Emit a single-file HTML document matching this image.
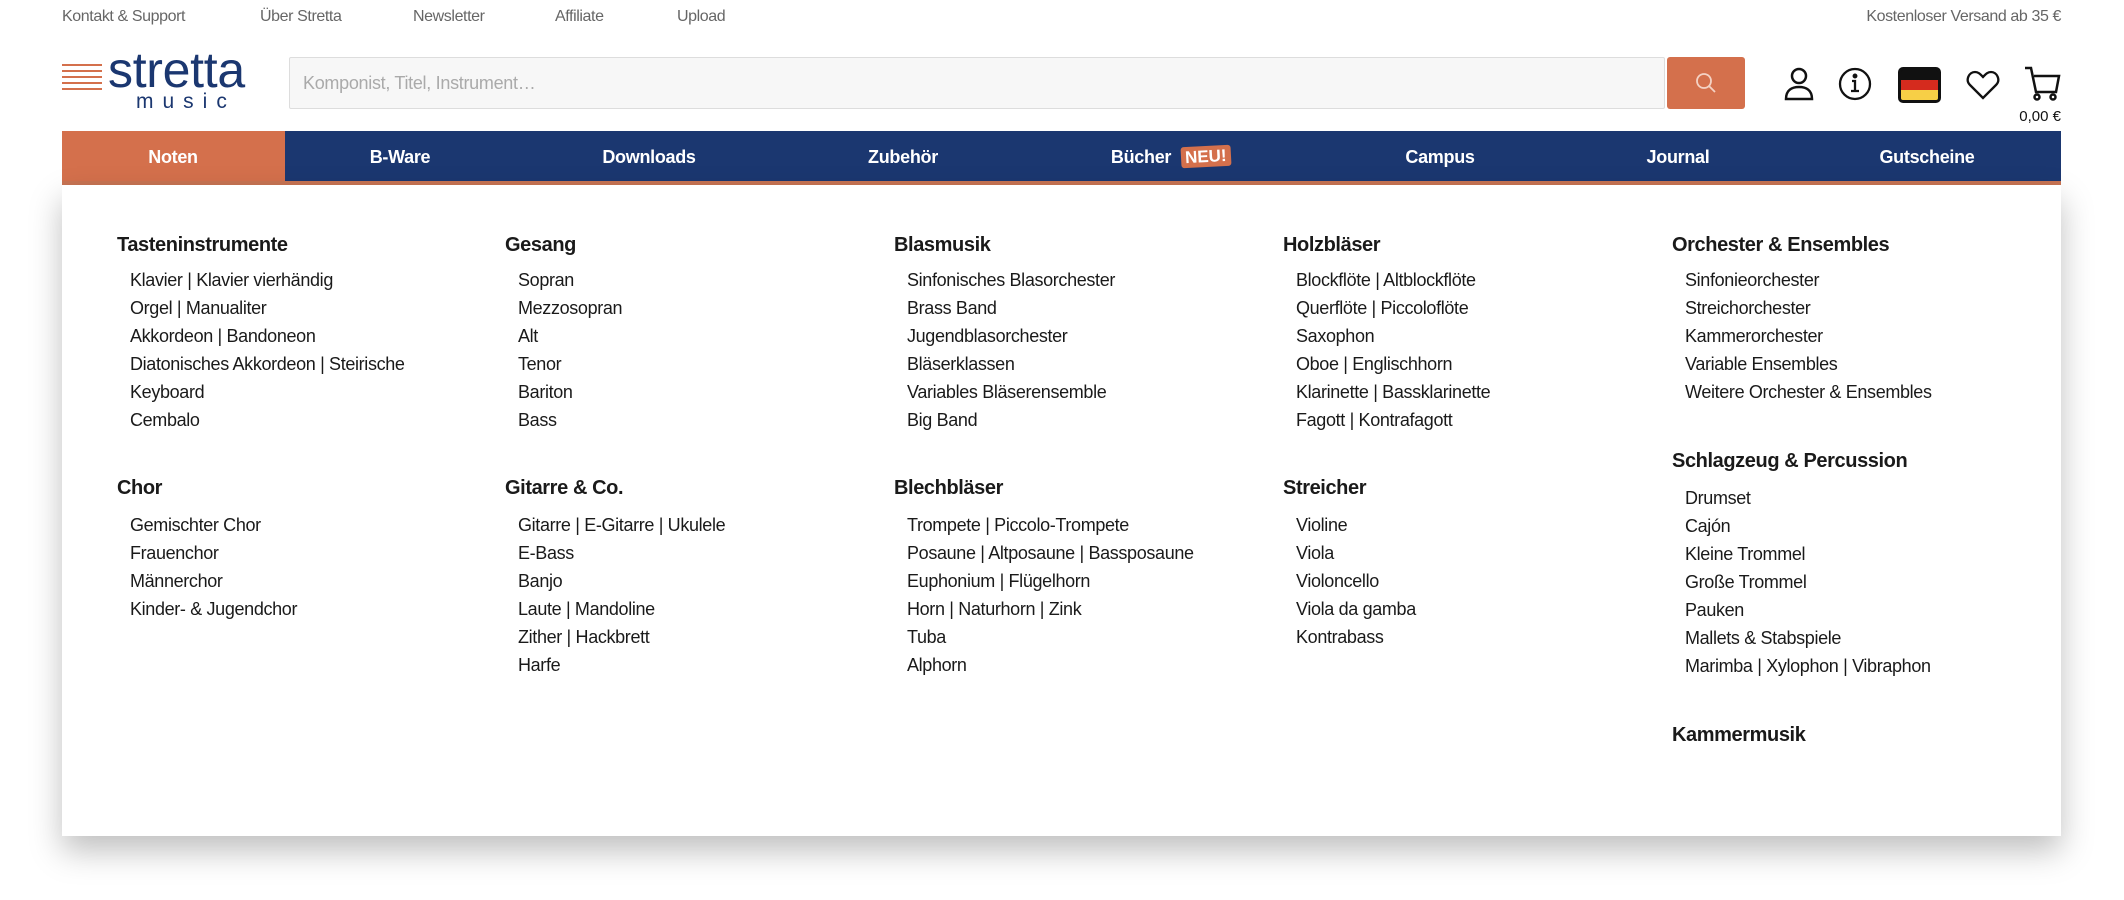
<!DOCTYPE html>
<html><head><meta charset="utf-8">
<style>
*{margin:0;padding:0;box-sizing:border-box}
body{width:2124px;height:900px;background:#fff;font-family:"Liberation Sans",sans-serif;position:relative;overflow:hidden;color:#1a1a1a}
.a{position:absolute;white-space:nowrap}
.top{font-size:16px;color:#666;top:8px;letter-spacing:-0.4px}
.nav{position:absolute;left:62px;top:131px;width:1999px;height:52px;background:#1b3770}
.navb{position:absolute;left:62px;top:181px;width:1999px;height:4px;background:#c87453}
.ni{position:absolute;top:147px;color:#fff;font-size:18px;font-weight:bold;transform:translateX(-50%);letter-spacing:-0.3px}
.panel{position:absolute;left:62px;top:185px;width:1999px;height:651px;background:#fff;box-shadow:0 15px 30px rgba(0,0,0,0.25)}
.h{position:absolute;font-size:20px;font-weight:bold;letter-spacing:-0.4px;white-space:nowrap;line-height:28px}
.l{position:absolute;font-size:18px;line-height:28px;letter-spacing:-0.35px;white-space:nowrap}
</style></head><body>
<div class="a top" style="left:62px">Kontakt &amp; Support</div>
<div class="a top" style="left:260px">Über Stretta</div>
<div class="a top" style="left:413px">Newsletter</div>
<div class="a top" style="left:555px">Affiliate</div>
<div class="a top" style="left:677px">Upload</div>
<div class="a top" style="right:63px">Kostenloser Versand ab 35 €</div>

<div class="a" style="left:62px;top:64px;width:40px">
<div style="height:2px;background:#d4704c;margin-bottom:4px"></div><div style="height:2px;background:#d4704c;margin-bottom:4px"></div><div style="height:2px;background:#d4704c;margin-bottom:4px"></div><div style="height:2px;background:#d4704c;margin-bottom:4px"></div><div style="height:2px;background:#d4704c"></div></div>
<div class="a" style="left:108px;top:44px;font-size:50px;color:#1b3770;letter-spacing:-0.3px;line-height:52px">stretta</div>
<div class="a" style="left:136px;top:91px;font-size:21px;color:#1b3770;letter-spacing:9px;line-height:22px">music</div>

<div class="a" style="left:289px;top:57px;width:1376px;height:52px;background:#f7f7f7;border:1px solid #ddd;border-radius:2px"></div>
<div class="a" style="left:303px;top:73px;font-size:18px;color:#aaa;letter-spacing:-0.3px">Komponist, Titel, Instrument…</div>
<div class="a" style="left:1667px;top:57px;width:78px;height:52px;background:#d4704c;border-radius:3px"></div>
<svg class="a" style="left:1694px;top:71px" width="24" height="24" viewBox="0 0 24 24" fill="none" stroke="#f4d2c4" stroke-width="1.8"><circle cx="10" cy="10" r="7"/><path d="M15 15l6 6"/></svg>

<svg class="a" style="left:1783px;top:67px" width="32" height="34" viewBox="0 0 32 34" fill="none" stroke="#111" stroke-width="2.5"><circle cx="16" cy="9" r="7"/><path d="M3 32c0-9 6-12 13-12s13 3 13 12z"/></svg>
<svg class="a" style="left:1838px;top:67px" width="34" height="34" viewBox="0 0 34 34" fill="none" stroke="#111" stroke-width="2.3"><circle cx="17" cy="17" r="15"/><path d="M14 14h3v10M13 24h8"/><circle cx="17" cy="9" r="1.3" fill="#111"/></svg>
<div class="a" style="left:1898px;top:67px;width:43px;height:36px;border:3px solid #111;border-radius:5px;overflow:hidden;background:linear-gradient(#111 0 33%,#d52b1e 33% 66%,#f7cf46 66%)"></div>
<svg class="a" style="left:1966px;top:70px" width="34" height="30" viewBox="0 0 34 30" fill="none" stroke="#111" stroke-width="2.3"><path d="M17 28L4 15C-1 10 3 2 9 2c4 0 6 3 8 5 2-2 4-5 8-5 6 0 10 8 5 13z"/></svg>
<svg class="a" style="left:2024px;top:66px" width="38" height="36" viewBox="0 0 38 36" fill="none" stroke="#111" stroke-width="2.5"><path d="M1 2h6l5 24h20l3-16H10"/><circle cx="13" cy="31" r="2.5"/><circle cx="29" cy="31" r="2.5"/></svg>
<div class="a" style="right:63px;top:108px;font-size:15px;color:#111">0,00 €</div>

<div class="nav"></div>
<div class="a" style="left:62px;top:131px;width:223px;height:52px;background:#d4704c"></div>
<div class="navb"></div>
<div class="ni" style="left:173px">Noten</div>
<div class="ni" style="left:400px">B-Ware</div>
<div class="ni" style="left:649px">Downloads</div>
<div class="ni" style="left:903px">Zubehör</div>
<div class="ni" style="left:1141px">Bücher</div>
<div class="a" style="left:1181px;top:146px;background:#d4704c;color:#fff;font-size:17px;font-weight:bold;padding:0 4px;border-radius:3px;transform:rotate(-3deg);line-height:21px">NEU!</div>
<div class="ni" style="left:1440px">Campus</div>
<div class="ni" style="left:1678px">Journal</div>
<div class="ni" style="left:1927px">Gutscheine</div>

<div class="panel"></div>

<div class="h" style="left:117px;top:231px">Tasteninstrumente</div>
<div class="l" style="left:130px;top:266px">Klavier | Klavier vierhändig<br>Orgel | Manualiter<br>Akkordeon | Bandoneon<br>Diatonisches Akkordeon | Steirische<br>Keyboard<br>Cembalo</div>
<div class="h" style="left:117px;top:474px">Chor</div>
<div class="l" style="left:130px;top:511px">Gemischter Chor<br>Frauenchor<br>Männerchor<br>Kinder- &amp; Jugendchor</div>

<div class="h" style="left:505px;top:231px">Gesang</div>
<div class="l" style="left:518px;top:266px">Sopran<br>Mezzosopran<br>Alt<br>Tenor<br>Bariton<br>Bass</div>
<div class="h" style="left:505px;top:474px">Gitarre &amp; Co.</div>
<div class="l" style="left:518px;top:511px">Gitarre | E-Gitarre | Ukulele<br>E-Bass<br>Banjo<br>Laute | Mandoline<br>Zither | Hackbrett<br>Harfe</div>

<div class="h" style="left:894px;top:231px">Blasmusik</div>
<div class="l" style="left:907px;top:266px">Sinfonisches Blasorchester<br>Brass Band<br>Jugendblasorchester<br>Bläserklassen<br>Variables Bläserensemble<br>Big Band</div>
<div class="h" style="left:894px;top:474px">Blechbläser</div>
<div class="l" style="left:907px;top:511px">Trompete | Piccolo-Trompete<br>Posaune | Altposaune | Bassposaune<br>Euphonium | Flügelhorn<br>Horn | Naturhorn | Zink<br>Tuba<br>Alphorn</div>

<div class="h" style="left:1283px;top:231px">Holzbläser</div>
<div class="l" style="left:1296px;top:266px">Blockflöte | Altblockflöte<br>Querflöte | Piccoloflöte<br>Saxophon<br>Oboe | Englischhorn<br>Klarinette | Bassklarinette<br>Fagott | Kontrafagott</div>
<div class="h" style="left:1283px;top:474px">Streicher</div>
<div class="l" style="left:1296px;top:511px">Violine<br>Viola<br>Violoncello<br>Viola da gamba<br>Kontrabass</div>

<div class="h" style="left:1672px;top:231px">Orchester &amp; Ensembles</div>
<div class="l" style="left:1685px;top:266px">Sinfonieorchester<br>Streichorchester<br>Kammerorchester<br>Variable Ensembles<br>Weitere Orchester &amp; Ensembles</div>
<div class="h" style="left:1672px;top:447px">Schlagzeug &amp; Percussion</div>
<div class="l" style="left:1685px;top:484px">Drumset<br>Cajón<br>Kleine Trommel<br>Große Trommel<br>Pauken<br>Mallets &amp; Stabspiele<br>Marimba | Xylophon | Vibraphon</div>
<div class="h" style="left:1672px;top:721px">Kammermusik</div>
</body></html>
